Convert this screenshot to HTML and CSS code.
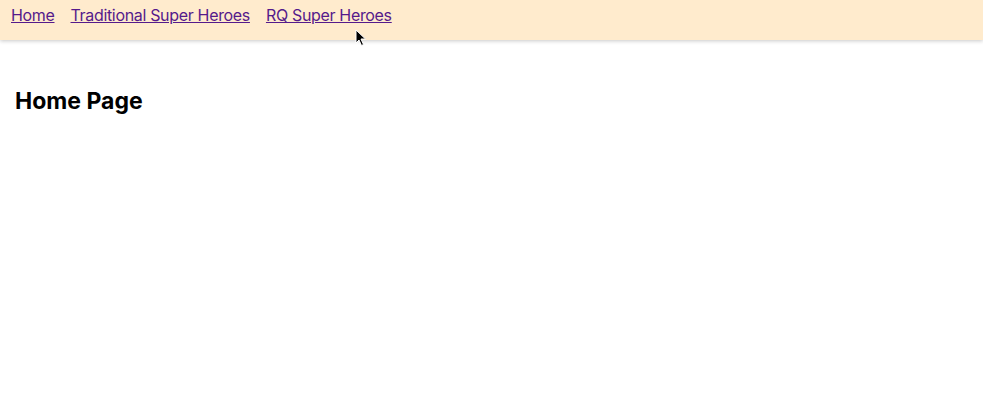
FILE: index.html
```html
<!DOCTYPE html>
<html>
<head>
<meta charset="utf-8">
<link rel="stylesheet" href="styles.css">
</head>
<body>
<nav class="nav">
  <ul class="nav-list">
    <li><a href="#" class="nav-link">Home</a></li>
    <li><a href="#" class="nav-link">Traditional Super Heroes</a></li>
    <li><a href="#" class="nav-link">RQ Super Heroes</a></li>
  </ul>
</nav>
<main class="content">
  <h2 class="title">Home Page</h2>
</main>
<svg class="cursor" width="12" height="18" viewBox="0 0 12 18">
  <path d="M1 1 L1 14 L4 11 L6.5 16.5 L8.5 15.5 L6 10 L10.5 10 Z" fill="#000" stroke="#fff" stroke-width="1"/>
</svg>
</body>
</html>
```
FILE: styles.css
```css
html, body {
  margin: 0;
  padding: 0;
  background: #fff;
  font-family: Inter, "Noto Sans", sans-serif;
}
.nav {
  background: #ffebcd;
  height: 40px;
  box-shadow: 0 1px 4px rgba(0,0,0,0.22);
}
.nav-list {
  list-style: none;
  margin: 0;
  padding: 4px 0 0 11px;
  display: flex;
  gap: 16px;
}
.nav-link {
  color: #551a8b;
  font-size: 16px;
  letter-spacing: -0.33px;
  line-height: 22px;
  text-decoration: underline;
}
.content {
  padding: 46px 15px 0;
}
.title {
  margin: 0;
  font-size: 23px;
  line-height: 30px;
  font-weight: 700;
  color: #000;
}
.cursor {
  position: absolute;
  left: 355px;
  top: 29px;
}
```
